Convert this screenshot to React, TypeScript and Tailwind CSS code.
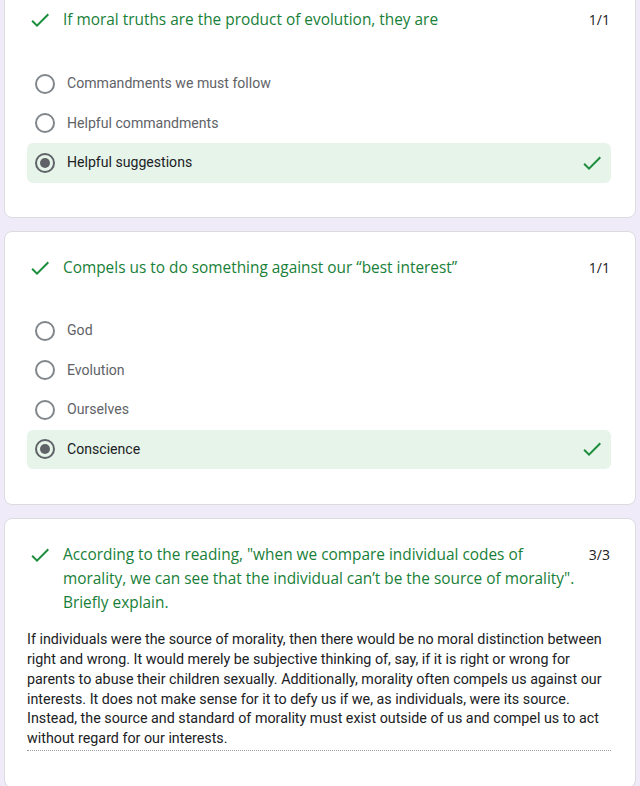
import React from 'react'

const titleFont = { fontFamily: '"Open Sans", Roboto, sans-serif' }

function Check({ className = '' }: { className?: string }) {
  return (
    <svg viewBox="0 0 24 24" className={className} fill="#1e8e3e">
      <path d="M9 16.17L4.83 12l-1.42 1.41L9 19 21 7l-1.41-1.41z" />
    </svg>
  )
}

function Radio({ checked }: { checked: boolean }) {
  return (
    <div
      className={`w-5 h-5 rounded-full border-2 flex items-center justify-center shrink-0 ${
        checked ? 'border-[#5f6368]' : 'border-[#80868b]'
      }`}
    >
      {checked && <div className="w-[10px] h-[10px] rounded-full bg-[#5f6368]" />}
    </div>
  )
}

function Option({ label, selected }: { label: string; selected?: boolean }) {
  return (
    <div
      className={`h-[39.6px] flex items-center pl-[8px] pr-[7px] rounded-md ${
        selected ? 'bg-[#e6f4ea]' : ''
      }`}
    >
      <Radio checked={!!selected} />
      <span
        className={`ml-[12px] text-[14.1px] flex-1 ${selected ? 'text-[#202124]' : 'text-[#5f6368]'}`}
      >
        {label}
      </span>
      {selected && <Check className="w-6 h-6" />}
    </div>
  )
}

function QuestionHeader({ title, score }: { title: string; score: string }) {
  return (
    <div className="flex items-start pl-[1px]">
      <Check className="w-6 h-6 shrink-0" />
      <div style={titleFont} className="ml-[11px] flex-1 text-[15.4px] leading-6 text-[#188038]">
        <span style={titleFont} className="float-right ml-[40px] text-[14px] leading-6 text-[#202124] pr-[1px]">
          {score}
        </span>
        {title}
      </div>
    </div>
  )
}

function Card({ children, className = '' }: { children: React.ReactNode; className?: string }) {
  return (
    <div className={`bg-white rounded-lg border border-[#dadce0] pt-6 pl-[22px] pr-[24px] ${className}`}>
      {children}
    </div>
  )
}

export default function App() {
  return (
    <div className="min-h-screen bg-[#f0ebf8] px-1 pb-4" style={{ fontFamily: 'Roboto, Arial, sans-serif' }}>
      <div className="flex flex-col gap-[13px] -mt-[17px]">
        <Card className="pb-[34px]">
          <QuestionHeader title="If moral truths are the product of evolution, they are" score="1/1" />
          <div className="mt-[32px] flex flex-col">
            <Option label="Commandments we must follow" />
            <Option label="Helpful commandments" />
            <Option label="Helpful suggestions" selected />
          </div>
        </Card>

        <Card className="pb-[35px]">
          <QuestionHeader title="Compels us to do something against our “best interest”" score="1/1" />
          <div className="mt-[31px] flex flex-col">
            <Option label="God" />
            <Option label="Evolution" />
            <Option label="Ourselves" />
            <Option label="Conscience" selected />
          </div>
        </Card>

        <Card className="pb-[36px]">
          <QuestionHeader
            title={'According to the reading, "when we compare individual codes of morality, we can see that the individual can\u2019t be the source of morality". Briefly explain.'}
            score="3/3"
          />
          <div className="mt-[15px] text-[14.3px] leading-[19.8px] text-[#202124] border-b border-dotted border-[#9aa0a6] pb-[1px]">
            If individuals were the source of morality, then there would be no moral distinction between
            right and wrong. It would merely be subjective thinking of, say, if it is right or wrong for
            parents to abuse their children sexually. Additionally, morality often compels us against our
            interests. It does not make sense for it to defy us if we, as individuals, were its source.
            Instead, the source and standard of morality must exist outside of us and compel us to act
            without regard for our interests.
          </div>
        </Card>
      </div>
    </div>
  )
}
